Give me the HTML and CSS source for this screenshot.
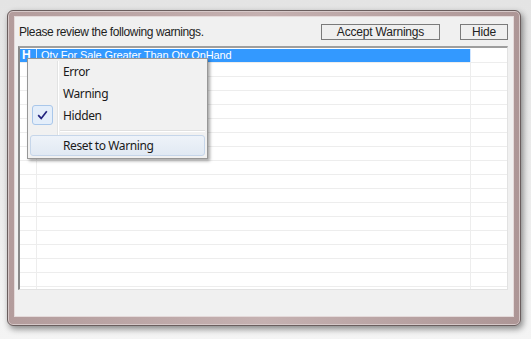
FILE: index.html
```html
<!DOCTYPE html>
<html>
<head>
<meta charset="utf-8">
<link rel="stylesheet" href="styles.css">
</head>
<body>
<div class="window">
  <div class="client">
    <div class="header">
      <span class="prompt">Please review the following warnings.</span>
      <button class="btn btn-accept">Accept Warnings</button>
      <button class="btn btn-hide">Hide</button>
    </div>
    <div class="grid">
      <div class="row selected"><div class="c1">H</div><div class="c2">Qty For Sale Greater Than Qty OnHand</div><div class="c3"></div></div>
      <div class="row"><div class="c1"></div><div class="c2"></div><div class="c3"></div></div>
      <div class="row"><div class="c1"></div><div class="c2"></div><div class="c3"></div></div>
      <div class="row"><div class="c1"></div><div class="c2"></div><div class="c3"></div></div>
      <div class="row"><div class="c1"></div><div class="c2"></div><div class="c3"></div></div>
      <div class="row"><div class="c1"></div><div class="c2"></div><div class="c3"></div></div>
      <div class="row"><div class="c1"></div><div class="c2"></div><div class="c3"></div></div>
      <div class="row"><div class="c1"></div><div class="c2"></div><div class="c3"></div></div>
      <div class="row"><div class="c1"></div><div class="c2"></div><div class="c3"></div></div>
      <div class="row"><div class="c1"></div><div class="c2"></div><div class="c3"></div></div>
      <div class="row"><div class="c1"></div><div class="c2"></div><div class="c3"></div></div>
      <div class="row"><div class="c1"></div><div class="c2"></div><div class="c3"></div></div>
      <div class="row"><div class="c1"></div><div class="c2"></div><div class="c3"></div></div>
      <div class="row"><div class="c1"></div><div class="c2"></div><div class="c3"></div></div>
      <div class="row"><div class="c1"></div><div class="c2"></div><div class="c3"></div></div>
      <div class="row"><div class="c1"></div><div class="c2"></div><div class="c3"></div></div>
      <div class="row"><div class="c1"></div><div class="c2"></div><div class="c3"></div></div>
      <div class="row"><div class="c1"></div><div class="c2"></div><div class="c3"></div></div>
    </div>
    <div class="menu">
      <div class="gutter-line"></div>
      <div class="item">Error</div>
      <div class="item">Warning</div>
      <div class="item checked">
        <span class="check"><svg width="11" height="10" viewBox="0 0 11 10"><path d="M1.2 5.2 L4.2 8.4 L9.8 1.2" fill="none" stroke="#23237e" stroke-width="1.7" stroke-linejoin="miter"/></svg></span>
        Hidden
      </div>
      <div class="sep"></div>
      <div class="item hover">Reset to Warning</div>
    </div>
  </div>
</div>
</body>
</html>
```

FILE: styles.css
```css
html, body {
  margin: 0;
  padding: 0;
}
body {
  width: 531px;
  height: 339px;
  background: linear-gradient(#e4e4e4, #ececec 60%, #f4f4f4);
  overflow: hidden;
  font-family: "Liberation Sans", Arial, sans-serif;
}
.window {
  margin: 10px 0 0 7px;
  width: 514px;
  height: 316px;
  box-sizing: border-box;
  border: 1px solid #6a5e5e;
  border-radius: 6px;
  padding: 5px 6px 8px 6px;
  background: linear-gradient(90deg, #b39c9c, #c5b1b1 50%, #ad9696);
  box-shadow: 2px 3px 6px rgba(0, 0, 0, 0.45), inset 0 0 0 1px #d6c8c8;
}
.client {
  position: relative;
  height: 301px;
  box-sizing: border-box;
  border: 1px solid #e4dada;
  background: #f0f0f0;
}
.header {
  display: flex;
  align-items: center;
  height: 16px;
  padding: 7px 5px 0 4px;
}
.prompt {
  flex: 1;
  font-size: 12px;
  letter-spacing: -0.4px;
  color: #1e1e1e;
}
.btn {
  height: 16px;
  box-sizing: border-box;
  border: 1px solid #7a7a7a;
  background: #efefef;
  font-family: "Liberation Sans", Arial, sans-serif;
  font-size: 12px;
  letter-spacing: -0.2px;
  color: #222;
  padding: 0;
  line-height: 13px;
}
.btn-accept {
  width: 119px;
  margin-right: 20px;
}
.btn-hide {
  width: 48px;
}
.grid {
  margin: 6px 0 0 3px;
  width: 490px;
  height: 244px;
  box-sizing: border-box;
  border-top: 2px solid #9e9e9e;
  border-left: 2px solid #8a8a8a;
  border-right: 1px solid #e2e2e2;
  border-bottom: 1px solid #e2e2e2;
  background: #fff;
  padding-top: 1px;
  overflow: hidden;
}
.row {
  display: flex;
  height: 14px;
  box-sizing: border-box;
  border-bottom: 1px solid #ededed;
}
.row > div {
  box-sizing: border-box;
  border-right: 1px solid #ededed;
  font-size: 11px;
  line-height: 13px;
  white-space: nowrap;
  overflow: hidden;
}
.c1 { width: 17px; }
.c2 { width: 434px; }
.c3 { flex: 1; border-right: none !important; }
.selected .c1, .selected .c2 {
  background: #3399ff;
  color: #fff;
  border-right-color: #cfe5ff;
}
.selected .c1 {
  font-weight: bold;
  padding-left: 2px;
  font-size: 12px;
}
.selected .c2 {
  padding-left: 4px;
  letter-spacing: -0.1px;
}
.menu {
  position: absolute;
  left: 12px;
  top: 41px;
  width: 181px;
  box-sizing: border-box;
  border: 1px solid #979797;
  background: #f1f1f1;
  padding: 2px;
  box-shadow: 2px 2px 3px rgba(0, 0, 0, 0.35);
  font-family: "Noto Sans", "Open Sans", sans-serif;
  font-size: 12px;
  letter-spacing: -0.4px;
  color: #1a1a1a;
}
.gutter-line {
  position: absolute;
  left: 29px;
  top: 2px;
  bottom: 2px;
  width: 1px;
  background: #e2e3e3;
  box-shadow: 1px 0 0 #fff;
}
.item {
  position: relative;
  height: 22px;
  line-height: 22px;
  padding-left: 33px;
  box-sizing: border-box;
}
.check {
  position: absolute;
  left: 2px;
  top: 0;
  width: 21px;
  height: 20px;
  box-sizing: border-box;
  border: 1px solid #a9c7ea;
  border-radius: 3px;
  background: #e4eefa;
  display: flex;
  align-items: center;
  justify-content: center;
}
.sep {
  height: 8px;
  margin-left: 30px;
  position: relative;
}
.sep::before {
  content: "";
  position: absolute;
  left: 0;
  right: 0;
  top: 3px;
  height: 1px;
  background: #e0e0e0;
  box-shadow: 0 1px 0 #fff;
}
.item.hover {
  border: 1px solid #c6d6ea;
  border-radius: 3px;
  background: linear-gradient(#eef3f9, #e1e9f3);
  line-height: 20px;
  padding-left: 32px;
  height: 21px;
}
```
